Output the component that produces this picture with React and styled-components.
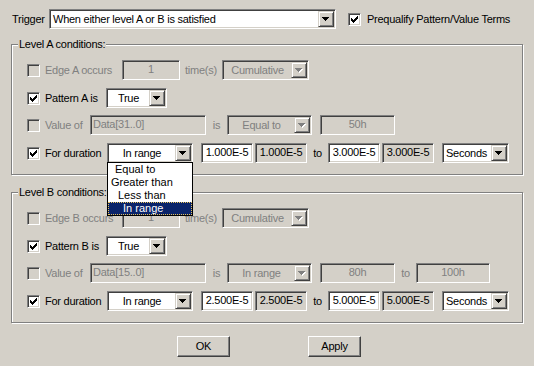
import React from 'react'
import styled, { createGlobalStyle } from 'styled-components'

const face = '#d4d0c8'
const gray = '#808080'
const dark = '#404040'

const GlobalStyle = createGlobalStyle`
  html, body {
    margin: 0;
    background: ${face};
  }
  body {
    font-family: 'Liberation Sans', Arial, sans-serif;
    font-size: 11px;
    letter-spacing: -0.25px;
  }
`

const Dialog = styled.div`
  width: 534px;
  height: 366px;
  box-sizing: border-box;
  padding-top: 9px;
  background: ${face};
  color: #000;
  line-height: 13px;
  display: flex;
  flex-direction: column;
  overflow: hidden;
`

const TopRow = styled.div`
  display: flex;
  align-items: center;
  height: 20px;
  padding-left: 12px;
  margin-bottom: 15px;
`

const TriggerLabel = styled.span`
  width: 37px;
  flex-shrink: 0;
`

const Row = styled.div`
  display: flex;
  align-items: center;
  height: 20px;
  flex-shrink: 0;
  margin-top: ${p => p.$gap || 0}px;
`

const Group = styled.div`
  position: relative;
  margin: ${p => p.$mt || 0}px 0 0 11px;
  width: 512px;
  height: 131px;
  box-sizing: border-box;
  border: 1px solid ${gray};
  box-shadow: inset 1px 1px 0 #fff, 1px 1px 0 #fff;
  padding: 15px 0 0 15px;
  display: flex;
  flex-direction: column;
`

const GroupTitle = styled.span`
  position: absolute;
  top: -7px;
  left: 6px;
  padding: 0 1px;
  background: ${face};
`

const CheckField = styled.label`
  display: flex;
  align-items: center;
  gap: ${p => p.$gap || 5}px;
  width: ${p => (p.$w ? `${p.$w}px` : 'auto')};
  margin-left: ${p => p.$ml || 0}px;
  flex-shrink: 0;
  white-space: nowrap;
  color: ${p => (p.$disabled ? gray : '#000')};
`

const Box = styled.span`
  width: 13px;
  height: 13px;
  box-sizing: border-box;
  border: 1px solid;
  border-color: ${gray} #fff #fff ${gray};
  box-shadow: inset 1px 1px 0 ${dark}, inset -1px -1px 0 ${face};
  background: ${p => (p.$disabled ? face : '#fff')};
  display: flex;
  align-items: center;
  justify-content: center;
  flex-shrink: 0;
`

const Caption = styled.span`
  width: ${p => p.$w}px;
  flex-shrink: 0;
  text-align: center;
  white-space: nowrap;
  color: ${p => (p.$disabled ? gray : '#000')};
`

const Field = styled.div`
  width: ${p => p.$w}px;
  height: 20px;
  margin-left: ${p => p.$ml || 0}px;
  flex-shrink: 0;
  box-sizing: border-box;
  border: 1px solid;
  border-color: ${gray} #fff #fff ${gray};
  box-shadow: inset 1px 1px 0 ${dark}, inset -1px -1px 0 ${face};
  background: ${p => (p.$fill === 'white' ? '#fff' : face)};
  color: ${p => (p.$disabled ? gray : '#000')};
  text-align: ${p => p.$align || 'center'};
  padding: 0 2px;
  line-height: 17px;
  white-space: nowrap;
  overflow: hidden;
`

const ComboBox = styled.div`
  position: relative;
  display: flex;
  width: ${p => p.$w}px;
  height: 20px;
  margin-left: ${p => p.$ml || 0}px;
  flex-shrink: 0;
  box-sizing: border-box;
  border: 1px solid;
  border-color: ${gray} #fff #fff ${gray};
  box-shadow: inset 1px 1px 0 ${dark}, inset -1px -1px 0 ${face};
  padding: 1px;
  background: ${p => (p.$disabled ? face : '#fff')};
`

const ComboText = styled.div`
  flex: 1;
  min-width: 0;
  padding: 0 2px;
  line-height: 16px;
  text-align: ${p => p.$align || 'center'};
  color: ${p => (p.$disabled ? gray : '#000')};
  white-space: nowrap;
  overflow: hidden;
`

const DropButton = styled.div`
  width: 16px;
  height: 16px;
  box-sizing: border-box;
  border: 1px solid;
  border-color: ${face} ${dark} ${dark} ${face};
  box-shadow: inset 1px 1px 0 #fff, inset -1px -1px 0 ${gray};
  background: ${face};
  display: flex;
  align-items: center;
  justify-content: center;
  flex-shrink: 0;
`

const DropList = styled.div`
  position: absolute;
  top: 100%;
  left: -1px;
  width: calc(100% + 2px);
  box-sizing: border-box;
  border: 1px solid #000;
  background: #fff;
  z-index: 10;
  letter-spacing: 0;
`

const ListItem = styled.div`
  height: 13px;
  box-sizing: border-box;
  line-height: 13px;
  padding-left: ${p => p.$indent}px;
  white-space: nowrap;
  background: ${p => (p.$selected ? '#0a246a' : 'transparent')};
  color: ${p => (p.$selected ? '#fff' : '#000')};
  border: 1px dotted ${p => (p.$selected ? '#e6c35c' : 'transparent')};
  line-height: 11px;
`

const ButtonRow = styled.div`
  display: flex;
  justify-content: center;
  gap: 78px;
  margin-top: 13px;
  padding-left: 4px;
`

const PushButton = styled.button`
  width: 53px;
  height: 21px;
  box-sizing: border-box;
  border: 1px solid;
  border-color: #fff ${dark} ${dark} #fff;
  box-shadow: inset -1px -1px 0 ${gray}, inset 1px 1px 0 ${face};
  background: ${face};
  font: inherit;
  letter-spacing: inherit;
  color: #000;
  padding: 0;
`

const CheckMark = () => (
  <svg width="7" height="7" viewBox="0 0 7 7" shapeRendering="crispEdges">
    <path
      fill="#000"
      d="M6 0h1v1H6zM5 1h2v1H5zM0 2h1v1H0zM4 2h3v1H4zM0 3h2v1H0zM3 3h3v1H3zM0 4h5v1H0zM1 5h3v1H1zM2 6h1v1H2z"
    />
  </svg>
)

const Arrow = ({ disabled }) => (
  <svg width="8" height="5" viewBox="0 0 8 5" shapeRendering="crispEdges">
    {disabled && <path fill="#fff" d="M1 1h7v1H1zM2 2h5v1H2zM3 3h3v1H3zM4 4h1v1H4z" />}
    <path fill={disabled ? gray : '#000'} d="M0 0h7v1H0zM1 1h5v1H1zM2 2h3v1H2zM3 3h1v1H3z" />
  </svg>
)

const Check = ({ w, gap, checked, disabled, children }) => (
  <CheckField $w={w} $gap={gap} $disabled={disabled}>
    <Box $disabled={disabled}>{checked && <CheckMark />}</Box>
    {children}
  </CheckField>
)

const Combo = ({ w, ml, value, align, disabled, children }) => (
  <ComboBox $w={w} $ml={ml} $disabled={disabled}>
    <ComboText $align={align} $disabled={disabled}>{value}</ComboText>
    <DropButton>
      <Arrow disabled={disabled} />
    </DropButton>
    {children}
  </ComboBox>
)

const rangeOptions = [
  { label: 'Equal to', indent: 6 },
  { label: 'Greater than', indent: 2 },
  { label: 'Less than', indent: 9 },
  { label: 'In range', indent: 14 }
]

const RangeList = ({ selected }) => (
  <DropList>
    {rangeOptions.map(opt => (
      <ListItem key={opt.label} $indent={opt.indent} $selected={opt.label === selected}>
        {opt.label}
      </ListItem>
    ))}
  </DropList>
)

const LevelGroup = ({ level, mt, bus, valueMode, valueFrom, valueTo, from, to, open }) => (
  <Group $mt={mt}>
    <GroupTitle>Level {level} conditions:</GroupTitle>
    <Row>
      <Check w={95} disabled>Edge {level} occurs</Check>
      <Field $w={58} $disabled>1</Field>
      <Caption $w={42} $disabled>time(s)</Caption>
      <Combo w={87} value="Cumulative" disabled />
    </Row>
    <Row $gap={8}>
      <Check w={79} checked>Pattern {level} is</Check>
      <Combo w={61} value="True" />
    </Row>
    <Row $gap={7}>
      <Check w={63} disabled>Value of</Check>
      <Field $w={116} $align="left" $disabled>{bus}</Field>
      <Caption $w={21} $disabled>is</Caption>
      <Combo w={85} value={valueMode} disabled />
      <Field $w={75} $ml={8} $disabled>{valueFrom}</Field>
      {valueTo && (
        <>
          <Caption $w={21} $disabled>to</Caption>
          <Field $w={74} $disabled>{valueTo}</Field>
        </>
      )}
    </Row>
    <Row $gap={8}>
      <Check w={80} checked>For duration</Check>
      <Combo w={86} value="In range">
        {open && <RangeList selected="In range" />}
      </Combo>
      <Field $w={52} $ml={8} $fill="white">{from}</Field>
      <Field $w={52} $ml={2}>{from}</Field>
      <Caption $w={21}>to</Caption>
      <Field $w={52} $fill="white">{to}</Field>
      <Field $w={52} $ml={2}>{to}</Field>
      <Combo w={67} ml={8} value="Seconds" align="left" />
    </Row>
  </Group>
)

export default function App() {
  return (
    <Dialog>
      <GlobalStyle />
      <TopRow>
        <TriggerLabel>Trigger</TriggerLabel>
        <Combo w={287} value="When either level A or B is satisfied" align="left" />
        <CheckField $ml={12} $gap={6}>
          <Box>
            <CheckMark />
          </Box>
          Prequalify Pattern/Value Terms
        </CheckField>
      </TopRow>
      <LevelGroup
        level="A"
        bus="Data[31..0]"
        valueMode="Equal to"
        valueFrom="50h"
        from="1.000E-5"
        to="3.000E-5"
        open
      />
      <LevelGroup
        level="B"
        mt={17}
        bus="Data[15..0]"
        valueMode="In range"
        valueFrom="80h"
        valueTo="100h"
        from="2.500E-5"
        to="5.000E-5"
      />
      <ButtonRow>
        <PushButton>OK</PushButton>
        <PushButton>Apply</PushButton>
      </ButtonRow>
    </Dialog>
  )
}
